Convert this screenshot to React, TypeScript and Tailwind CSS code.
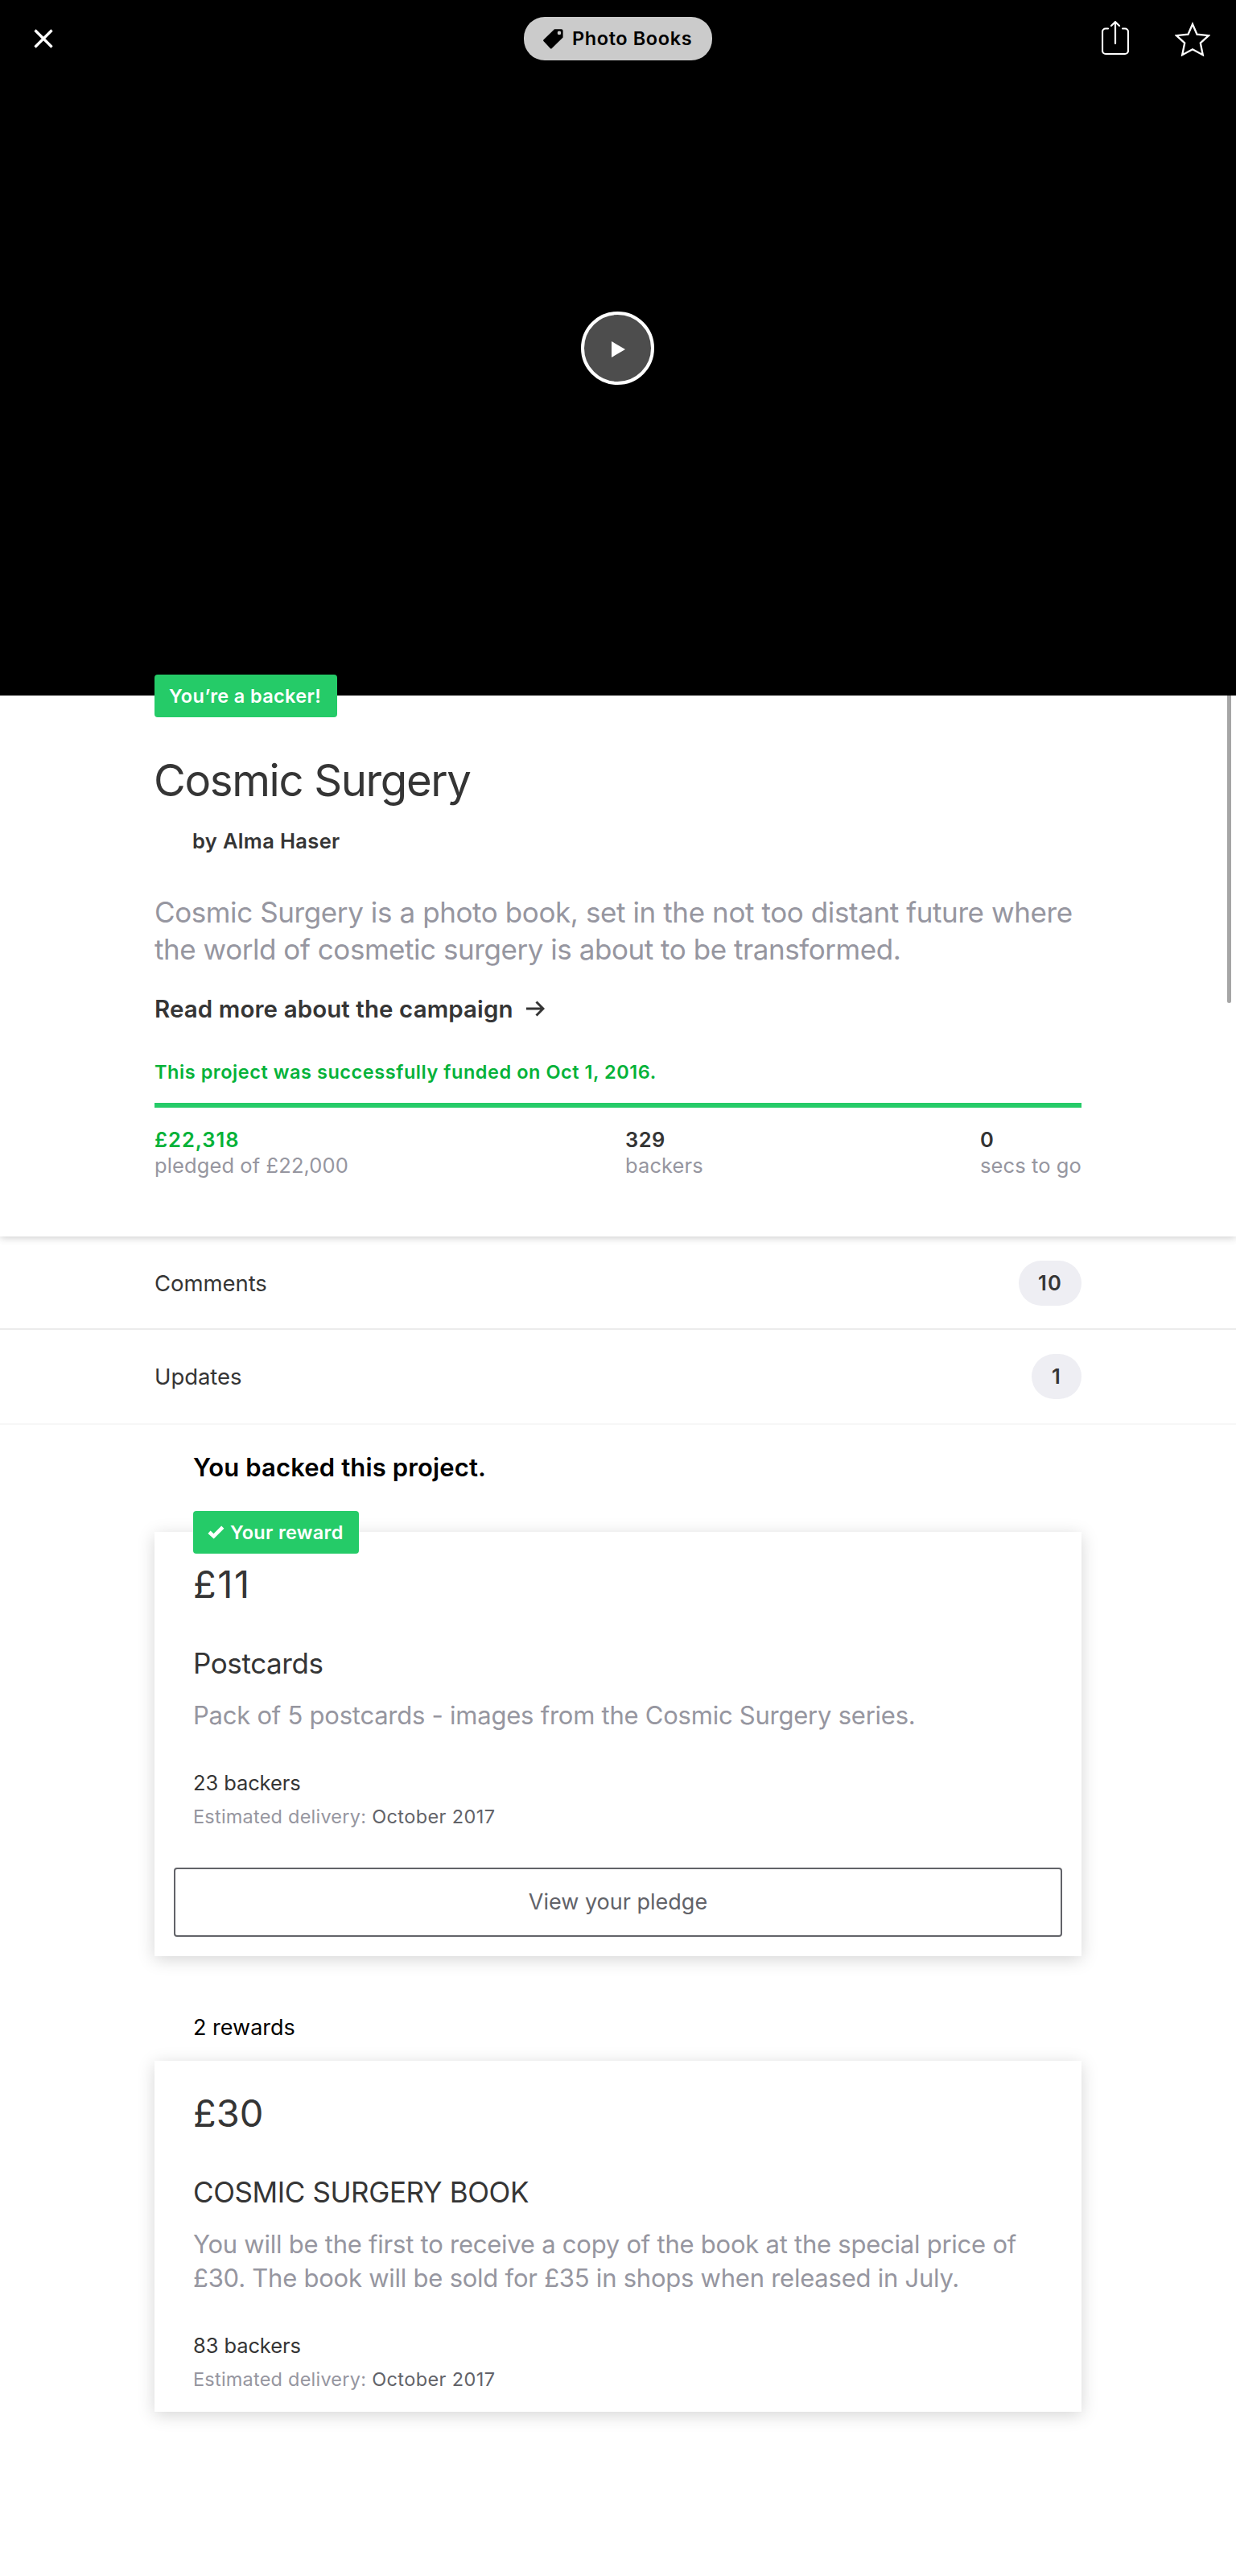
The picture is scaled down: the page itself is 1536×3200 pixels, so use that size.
import type { ReactNode } from "react";

function CloseIcon() {
  return (
    <svg width="24" height="24" viewBox="0 0 24 24" fill="none" stroke="#fff" strokeWidth="3.2">
      <path d="M1.5 1.5 22.5 22.5M22.5 1.5 1.5 22.5" />
    </svg>
  );
}

function TagIcon() {
  return (
    <svg width="25" height="25" viewBox="0 0 25 25" fill="#000">
      <path
        fillRule="evenodd"
        d="M14 0.2h8.6a2 2 0 0 1 2 2v8.3L10.6 24.2a1.2 1.2 0 0 1-1.6 0L0.6 15.3a1.5 1.5 0 0 1 0-2.1zM20 2.6a2.3 2.3 0 1 0 0 4.6a2.3 2.3 0 1 0 0-4.6z"
      />
    </svg>
  );
}

function ShareIcon() {
  return (
    <svg width="34" height="44" viewBox="0 0 34 44" fill="none" stroke="#fff" strokeWidth="2.2" strokeLinecap="round">
      <path d="M8 9.5H5a4 4 0 0 0-4 4v23.5a4 4 0 0 0 4 4h24a4 4 0 0 0 4-4V13.5a4 4 0 0 0-4-4h-3M17 28V2M12 6 17 1.2 22 6" />
    </svg>
  );
}

function StarIcon() {
  return (
    <svg width="44" height="44" viewBox="0 0 44 44" fill="none" stroke="#fff" strokeWidth="2.3">
      <path d="M22 4 27.5 16.7 42 18.2 31.8 27.5 34.8 42.2 22 35.2 9.2 42.2 12.2 27.5 2 18.2 16.5 16.7z" />
    </svg>
  );
}

function Hero() {
  return (
    <div className="relative h-[864px] bg-black">
      <div className="grid grid-cols-[1fr_234px_1fr] items-center pt-[21px]">
        <div className="pl-[42px]">
          <CloseIcon />
        </div>
        <div className="flex h-[54px] items-center rounded-[26px] bg-[#cbcbcb] pl-6">
          <TagIcon />
          <span className="ml-[11px] text-[23.5px] leading-8 font-semibold tracking-[0.6px] whitespace-nowrap text-black">
            Photo Books
          </span>
        </div>
        <div className="flex items-center justify-end gap-[57px] pr-8">
          <ShareIcon />
          <StarIcon />
        </div>
      </div>
      <div className="absolute inset-0 flex items-center justify-center pr-px">
        <div className="flex size-[91px] items-center justify-center rounded-full border-4 border-white bg-[#4d4d4d]">
          <svg width="17" height="20" viewBox="0 0 17 20" fill="#fff" className="mt-1 ml-px">
            <path d="M0 0 17 10 0 20z" />
          </svg>
        </div>
      </div>
    </div>
  );
}

function Stat({ value, label, valueClass }: { value: string; label: string; valueClass: string }) {
  return (
    <div className="text-[25.5px] leading-8">
      <div className={`font-semibold ${valueClass}`}>{value}</div>
      <div className="tracking-[0.1px] text-[#9696a0]">{label}</div>
    </div>
  );
}

function Summary() {
  return (
    <section className="relative z-10 bg-white px-48 pt-[73px] pb-[72px] shadow-[0_2px_9px_rgba(0,0,0,0.19)]">
      <div className="absolute top-[-26px] left-48 flex h-[53px] w-[227px] items-center rounded bg-[#25cb68] pl-[18px] text-[23.5px] leading-8 font-semibold tracking-[0.35px] text-white">
        You’re a backer!
      </div>
      <div className="absolute top-0 right-[6px] h-[382px] w-[5px] rounded-b-full bg-[#a6a6a6]" />
      <h1 className="-ml-px text-[54.5px] leading-[64px] tracking-[-1.36px] text-[#353535]">Cosmic Surgery</h1>
      <div className="mt-7 pl-[47px] text-[25.5px] leading-8 font-semibold tracking-[0.35px] text-[#353535]">by Alma Haser</div>
      <p className="mt-[49px] text-[35px] leading-[46px] tracking-[-0.42px] text-[#9696a0]">
        <span className="tracking-[-0.4px]">Cosmic Surgery is a photo book, set in the not too distant future where</span>
        <br />
        <span className="tracking-[-0.45px]">the world of cosmetic surgery is about to be transformed.</span>
      </p>
      <div className="mt-[33px] flex items-center text-[29.5px] leading-9 font-semibold tracking-[0.08px] text-[#353535]">
        Read more about the campaign
        <svg width="23" height="20" viewBox="0 0 23 20" fill="none" stroke="currentColor" strokeWidth="3" className="ml-4">
          <path d="M0 10H21M12.5 1.5 21 10 12.5 18.5" />
        </svg>
      </div>
      <div className="mt-[45px] text-[23.5px] leading-8 font-semibold tracking-[0.55px] text-[#05b239]">
        This project was successfully funded on Oct 1, 2016.
      </div>
      <div className="mt-[22px] h-[6px] bg-[#25cb68]" />
      <div className="mt-6 flex justify-between">
        <Stat value="£22,318" label="pledged of £22,000" valueClass="text-[#05b239] tracking-[1px]" />
        <Stat value="329" label="backers" valueClass="text-[#353535] tracking-[0.4px]" />
        <Stat value="0" label="secs to go" valueClass="text-[#353535]" />
      </div>
    </section>
  );
}

function LinkRow({ label, count, rowClass }: { label: string; count: string; rowClass: string }) {
  return (
    <div className={`flex items-center justify-between border-b-2 px-48 pt-[30px] ${rowClass}`}>
      <span className="text-[27.5px] leading-9 tracking-[-0.06px] text-[#353535]">{label}</span>
      <span className="flex h-14 min-w-[62px] items-center justify-center rounded-full bg-[#eeeef3] px-[24px] text-[25.5px] font-semibold tracking-[1.2px] text-[#353535]">
        {count}
      </span>
    </div>
  );
}

interface RewardProps {
  amount: string;
  amountClass?: string;
  title: string;
  lines: string[];
  backers: string;
  badge?: ReactNode;
  action?: ReactNode;
}

function RewardCard({ amount, amountClass = "", title, lines, backers, badge, action }: RewardProps) {
  return (
    <div className="relative bg-white pt-[37px] pb-6 shadow-[0_4px_20px_rgba(0,0,0,0.17)]">
      {badge}
      <div className="px-12">
        <div className={`text-[47px] leading-[56px] text-[#353535] ${amountClass}`}>{amount}</div>
        <div className="mt-[47px] text-[35px] leading-[46px] tracking-[-0.4px] text-[#353535]">{title}</div>
        <div className="mt-[21px] text-[31px] leading-[42px] tracking-[-0.24px] text-[#9696a0]">
          {lines.map((line) => (
            <div key={line}>{line}</div>
          ))}
        </div>
        <div className="mt-[47px] text-[25.5px] leading-8 tracking-[-0.1px] text-[#353535]">{backers}</div>
        <div className="mt-[10px] flex gap-[7px] text-[23.5px] leading-8">
          <span className="tracking-[0.22px] text-[#9696a0]">Estimated delivery:</span>
          <span className="tracking-[0.4px] text-[#626369]">October 2017</span>
        </div>
      </div>
      {action}
    </div>
  );
}

export default function App() {
  return (
    <div className="h-[3200px] w-[1536px] overflow-hidden bg-white font-['Inter',sans-serif]">
      <Hero />
      <Summary />
      <LinkRow label="Comments" count="10" rowClass="border-[#ebebeb] pb-7" />
      <LinkRow label="Updates" count="1" rowClass="border-[#f7f7f7] pb-[30px]" />
      <div className="px-48">
        <h2 className="mt-[33px] pl-12 text-[31px] leading-10 font-semibold tracking-[0.14px] text-black">
          You backed this project.
        </h2>
        <div className="mt-[60px]">
          <RewardCard
            amount="£11"
            amountClass="tracking-[1.6px]"
            title="Postcards"
            lines={["Pack of 5 postcards - images from the Cosmic Surgery series."]}
            backers="23 backers"
            badge={
              <div className="absolute top-[-26px] left-12 flex h-[53px] w-[206px] items-center rounded bg-[#25cb68] pl-[18px] text-[23.5px] leading-8 font-semibold tracking-[0.3px] text-white">
                <svg width="21" height="17" viewBox="0 0 21 17" fill="none" stroke="currentColor" strokeWidth="4.6" className="mr-[7px]">
                  <path d="M2 8.2 7.6 13.4 18.8 2.2" />
                </svg>
                Your reward
              </div>
            }
            action={
              <button className="mx-6 mt-[47px] flex h-[86px] w-[1104px] items-center justify-center rounded border-2 border-[#626369] text-[27px] text-[#626369]">
                View your pledge
              </button>
            }
          />
        </div>
        <div className="mt-[71px] mb-[23px] pl-12 text-[27px] leading-9 text-black">2 rewards</div>
        <RewardCard
          amount="£30"
          title="COSMIC SURGERY BOOK"
          lines={[
            "You will be the first to receive a copy of the book at the special price of",
            "£30. The book will be sold for £35 in shops when released in July.",
          ]}
          backers="83 backers"
        />
      </div>
    </div>
  );
}
